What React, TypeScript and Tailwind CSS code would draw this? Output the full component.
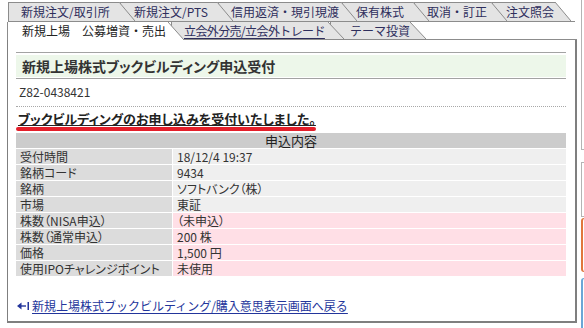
type TabDef = {
  label: string;
  outer: string;
  body: string;
  active?: boolean;
  underline?: boolean;
};

const topTabs: TabDef[] = [
  { label: "新規注文/取引所", outer: "w-[111px] z-[16]", body: "border-t pl-[12px]" },
  { label: "新規注文/PTS", outer: "w-[97px] z-[15]", body: "border-t pl-[13px]" },
  { label: "信用返済・現引現渡", outer: "w-[123px] z-[14]", body: "border-t pl-[12px]" },
  { label: "保有株式", outer: "w-[71px] z-[13]", body: "border-t pl-[13px]" },
  { label: "取消・訂正", outer: "w-[77px] z-[12]", body: "border-t pl-[12px]" },
  { label: "注文照会", outer: "w-[63px] z-[11]", body: "border-t pl-[13px]" },
];

const subTabs: TabDef[] = [
  { label: "新規上場　公募増資・売出", outer: "h-[18px] w-[161px] z-[30] -mb-px", body: "pl-[14px]", active: true },
  {
    label: "立会外分売/立会外トレード",
    outer: "h-[17px] ml-[3px] w-[157px] z-[29]",
    body: "pl-[12px] tracking-[-0.6px]",
    underline: true,
  },
  { label: "テーマ投資", outer: "h-[17px] ml-[2px] w-[80px] z-[28]", body: "pl-[19px]" },
];

const rows: [string, string, boolean][] = [
  ["受付時間", "18/12/4 19:37", false],
  ["銘柄コード", "9434", false],
  ["銘柄", "ソフトバンク（株）", false],
  ["市場", "東証", false],
  ["株数（NISA申込）", "（未申込）", true],
  ["株数（通常申込）", "200 株", true],
  ["価格", "1,500 円", true],
  ["使用IPOチャレンジポイント", "未使用", true],
];

function Tab({ tab }: { tab: TabDef }) {
  const fill = tab.active ? "#ffffff" : "#e4e4e4";
  return (
    <div className={`relative shrink-0 ${tab.outer}`}>
      <div
        className={`flex h-full items-center whitespace-nowrap border-l border-[#8c8c8c] text-[12px] leading-none ${tab.body} ${
          tab.active ? "bg-white text-[#222]" : "bg-[#e4e4e4] text-[#2e2e5c]"
        }`}
      >
        <span className={tab.underline ? "underline underline-offset-2" : ""}>{tab.label}</span>
      </div>
      <svg
        className="absolute -right-[16px] top-0 h-full w-[16px]"
        viewBox="0 0 16 18"
        preserveAspectRatio="none"
      >
        <polygon points="0,0 16,18 0,18" fill={fill} />
        <line x1="0" y1="0" x2="16" y2="18" stroke="#8c8c8c" strokeWidth="1" vectorEffect="non-scaling-stroke" />
      </svg>
    </div>
  );
}

function BackArrow() {
  return (
    <svg className="h-[10px] w-[13px] shrink-0" viewBox="0 0 13 10">
      <polygon points="0,5 4.5,1.5 4.5,8.5" fill="#23359b" />
      <rect x="4" y="4.3" width="5" height="1.4" fill="#23359b" />
      <rect x="10.5" y="1" width="1.5" height="8" fill="#23359b" />
    </svg>
  );
}

export default function App() {
  return (
    <div className="flex h-[328px] w-[584px] overflow-hidden bg-white font-['Noto_Sans_CJK_JP','Noto_Sans',sans-serif] text-[#333]">
      <div className="w-[578px] shrink-0">
        {/* 上段タブ */}
        <div className="ml-[8px] mt-[2px] flex h-[20px] w-[567px] gap-px border-b border-[#8c8c8c]">
          {topTabs.map((t) => (
            <Tab key={t.label} tab={t} />
          ))}
        </div>

        {/* 下段タブ */}
        <div className="ml-[7px] flex w-[570px] items-start border-b border-[#8c8c8c]">
          {subTabs.map((t) => (
            <Tab key={t.label} tab={t} />
          ))}
        </div>

        {/* 本体 */}
        <div className="ml-[7px] flex h-[283px] w-[570px] flex-col border-b-2 border-l border-r-2 border-[#7f7f7f] pl-[8px] pr-[9px] pt-[12px]">
          <div className="border-y border-[#a3a3a3] pb-px pt-[2px]">
            <div className="flex h-[22px] items-center bg-[#edf7ea] pl-[6px] text-[14px] font-bold text-[#333] [font-feature-settings:'palt']">
              新規上場株式ブックビルディング申込受付
            </div>
          </div>

          <div className="mt-[6px] pl-[3px] text-[12px] leading-[14px]">Z82-0438421</div>

          <div className="mt-[7px] border-t border-dotted border-[#a8a8a8]" />

          <div className="mt-[4px] flex">
            <div className="flex flex-col">
              <span className="pl-[2px] text-[13px] font-bold leading-[15px] text-[#222] underline underline-offset-1 [font-feature-settings:'palt']">
                ブックビルディングのお申し込みを受付いたしました。
              </span>
              <div className="mt-px h-[4px] rounded-full bg-[#e41f2a]" />
            </div>
          </div>

          <div className="mt-[2px] grid grid-cols-[156px_393px] gap-px text-[12px] leading-[15px] [font-feature-settings:'palt']">
            <div className="col-span-2 h-[15px] bg-[#cccccc] text-center text-[13px] text-[#222]">申込内容</div>
            {rows.map(([label, value, pink]) => (
              <div key={label} className="contents">
                <div className="h-[15px] overflow-hidden bg-[#dcdcdc] pl-[4px] text-[#333]">{label}</div>
                <div className={`h-[15px] overflow-hidden pl-[4px] text-[#333] ${pink ? "bg-[#ffdfe6]" : "bg-[#efefef]"}`}>
                  {value}
                </div>
              </div>
            ))}
          </div>

          <div className="mt-[23px] flex items-center gap-[2px] pl-px">
            <BackArrow />
            <a href="#" className="text-[12px] leading-[14px] text-[#23359b] underline underline-offset-2">
              新規上場株式ブックビルディング/購入意思表示画面へ戻る
            </a>
          </div>
        </div>
      </div>

      {/* 右側の欄 (一部のみ表示) */}
      <div className="flex flex-1 flex-col pl-[3px]">
        <div className="h-[150px] border-b border-l border-[#b4b4b4]" />
        <div className="mt-[12px] h-[55px] border-y border-l border-[#b4b4b4]" />
        <div className="mt-px h-[54px] rounded-l-[4px] border-y border-l-2 border-[#e0763c]" />
        <div className="mt-[6px] flex-1 rounded-tl-[4px] border-l-2 border-t border-[#6aa6d6]" />
      </div>
    </div>
  );
}
